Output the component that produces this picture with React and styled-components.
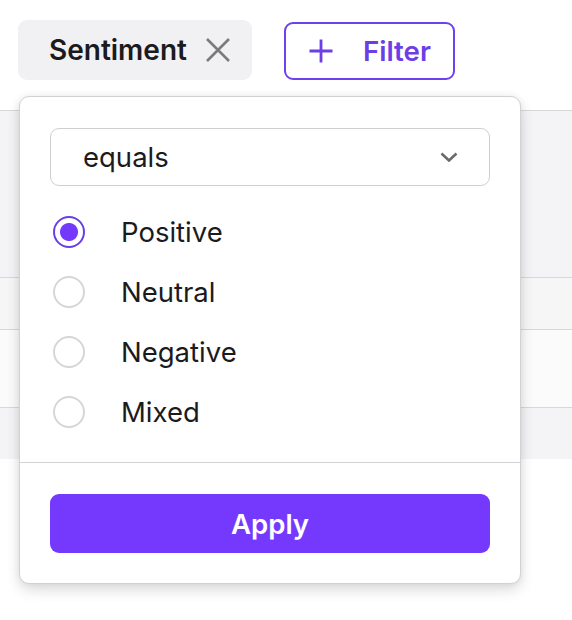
import styled, { createGlobalStyle } from 'styled-components';

const GlobalStyle = createGlobalStyle`
  html, body {
    margin: 0;
    padding: 0;
    background: #ffffff;
    font-family: Inter, "Noto Sans", "Liberation Sans", sans-serif;
  }
`;

const options = ['Positive', 'Neutral', 'Negative', 'Mixed'];
const rows = [
  { h: 167, bg: '#f4f4f6' },
  { h: 52, bg: '#f6f6f7' },
  { h: 78, bg: '#fbfbfc' },
  { h: 51, bg: '#f4f4f6' },
];

const App = () => {
    return (
        <Page>
            <GlobalStyle />
            <Toolbar>
                <Chip>
                    <ChipLabel>Sentiment</ChipLabel>
                    <svg width="26" height="26" viewBox="0 0 26 26" fill="none" stroke="#7b7b7d" strokeWidth="2.6" strokeLinecap="butt">
                        <path d="M2 2 L24 24 M24 2 L2 24" />
                    </svg>
                </Chip>
                <FilterButton>
                    <svg width="24" height="24" viewBox="0 0 24 24" fill="none" stroke="#6c3fe6" strokeWidth="2.8">
                        <path d="M12 0.5 V23.5 M0.5 12 H23.5" />
                    </svg>
                    <span>Filter</span>
                </FilterButton>
            </Toolbar>
            <Table>
                {rows.map((r, i) => (
                    <Row key={i} $h={r.h} $bg={r.bg} />
                ))}
            </Table>
            <Popover>
                <Body>
                    <Select>
                        <span>equals</span>
                        <svg width="18" height="10" viewBox="0 0 18 10" fill="none" stroke="#6a6a6c" strokeWidth="2.6">
                            <path d="M1.5 1.5 L9 8.5 L16.5 1.5" />
                        </svg>
                    </Select>
                    <RadioList>
                        {options.map((o, i) => (
                            <RadioRow key={o}>
                                <Radio $checked={i === 0} />
                                <RadioLabel>{o}</RadioLabel>
                            </RadioRow>
                        ))}
                    </RadioList>
                </Body>
                <Footer>
                    <ApplyButton>Apply</ApplyButton>
                </Footer>
            </Popover>
        </Page>
    )
}

export default App;

const Page = styled.div`
    position: relative;
    width: 572px;
    height: 620px;
    overflow: hidden;
`

const Toolbar = styled.div`
    display: flex;
    align-items: center;
    gap: 32px;
    padding: 20px 0 0 18px;
    height: 60px;
`

const Chip = styled.div`
    display: flex;
    align-items: center;
    gap: 18px;
    height: 60px;
    padding: 0 21px 0 31px;
    background: #f1f0f3;
    border-radius: 9px;
    box-sizing: border-box;
`

const ChipLabel = styled.span`
    font-size: 28px;
    font-weight: 600;
    color: #1b1b1d;
`

const FilterButton = styled.button`
    display: flex;
    align-items: center;
    gap: 30px;
    height: 58px;
    margin-top: 1px;
    padding: 0 22px 0 23px;
    border: 2.5px solid #6e40f0;
    border-radius: 9px;
    background: #ffffff;
    color: #6c3fe6;
    font-family: inherit;
    font-size: 27.7px;
    font-weight: 600;
    box-sizing: border-box;
`

const Table = styled.div`
    margin-top: 30px;
    border-top: 1.5px solid #d8d8da;
`

const Row = styled.div`
    height: ${p => p.$h}px;
    background: ${p => p.$bg};
    border-bottom: 1.5px solid #d8d8da;
    box-sizing: border-box;
    &:last-child {
        border-bottom: none;
    }
`

const Popover = styled.div`
    position: absolute;
    left: 19px;
    top: 96px;
    width: 502px;
    background: #ffffff;
    border: 1.5px solid #d2d2d4;
    border-radius: 10px;
    box-shadow: 0 6px 14px rgba(0, 0, 0, 0.14), 0 0 6px rgba(0, 0, 0, 0.06);
    box-sizing: border-box;
`

const Body = styled.div`
    padding: 31px 30px 20px;
`

const Select = styled.div`
    display: flex;
    align-items: center;
    justify-content: space-between;
    height: 58px;
    padding: 0 31px 0 32px;
    border: 1.5px solid #cfcfd1;
    border-radius: 9px;
    font-size: 27.5px;
    color: #1b1b1d;
    box-sizing: border-box;
`

const RadioList = styled.div`
    display: flex;
    flex-direction: column;
    margin-top: 16px;
`

const RadioRow = styled.div`
    display: flex;
    align-items: center;
    gap: 36px;
    height: 60px;
    padding-left: 3px;
`

const Radio = styled.span`
    flex-shrink: 0;
    width: 32px;
    height: 32px;
    border-radius: 50%;
    box-sizing: border-box;
    border: 2px solid ${p => p.$checked ? '#6a3fe8' : '#d6d6d8'};
    background: ${p => p.$checked ? 'radial-gradient(circle, #7539fe 0 8.5px, #ffffff 9.5px)' : '#ffffff'};
`

const RadioLabel = styled.span`
    font-size: 27.5px;
    color: #1b1b1d;
`

const Footer = styled.div`
    border-top: 1.5px solid #d2d2d4;
    padding: 31px 30px 30px;
`

const ApplyButton = styled.button`
    display: block;
    width: 100%;
    height: 59px;
    border: none;
    border-radius: 9px;
    background: #7539fe;
    color: #ffffff;
    font-family: inherit;
    font-size: 27.6px;
    font-weight: 600;
`
